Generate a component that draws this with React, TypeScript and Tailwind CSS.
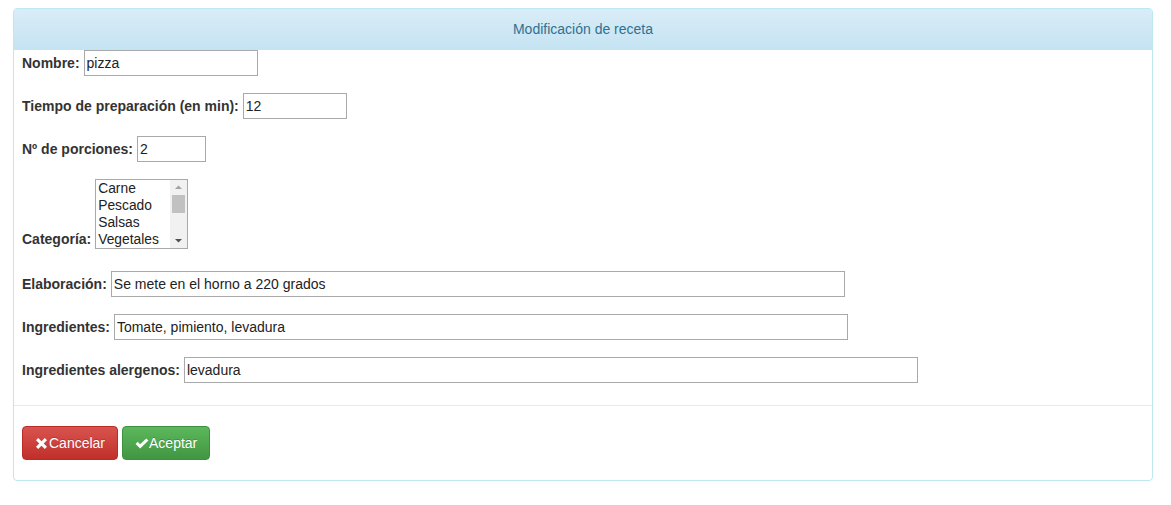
import React from 'react';

const font = { fontFamily: '"Liberation Sans", Arial, sans-serif' };

const inputCls =
  'h-[26px] border border-[#a9a9a9] bg-white px-[2px] text-[14px] text-[#222] outline-none';

interface FieldRowProps {
  label: string;
  value: string;
  width: string;
  className?: string;
}

const FieldRow: React.FC<FieldRowProps> = ({ label, value, width, className = 'mb-[17px]' }) => (
  <div className={`flex items-center gap-1 ${className}`}>
    <label className="text-[14px] font-bold leading-5 text-[#333]">{label}</label>
    <input type="text" readOnly value={value} className={`${inputCls} ${width}`} style={font} />
  </div>
);

const categories = ['Carne', 'Pescado', 'Salsas', 'Vegetales'];

const FakeListbox: React.FC = () => (
  <div className="flex h-[70px] w-[93px] border border-[#a9a9a9] bg-white">
    <ul className="flex-1 overflow-hidden pl-[2px] text-[13.8px] leading-[17px] text-[#222]">
      {categories.map((c) => (
        <li key={c}>{c}</li>
      ))}
    </ul>
    <div className="flex w-[17px] flex-col items-center bg-[#f1f1f1]">
      <svg width="17" height="15" viewBox="0 0 17 15">
        <path d="M5 9 L8.5 5.5 L12 9 Z" fill="#a3a3a3" />
      </svg>
      <div className="h-[18px] w-[13px] bg-[#c1c1c1]" />
      <div className="flex-1" />
      <svg width="17" height="15" viewBox="0 0 17 15">
        <path d="M5 6 L8.5 9.5 L12 6 Z" fill="#505050" />
      </svg>
    </div>
  </div>
);

export default function App() {
  return (
    <div className="bg-white pl-[13px] pt-[8px] pb-[24px]" style={font}>
      <div className="w-[1140px] rounded border border-[#bce8f1] bg-white">
        <div className="flex h-[41px] items-center justify-center rounded-t-[3px] bg-gradient-to-b from-[#d9edf7] to-[#c4e3f3] text-[14px] text-[#31708f]">
          Modificación de receta
        </div>

        <div className="px-[8px] pb-[22px]">
          <FieldRow label="Nombre:" value="pizza" width="w-[174px]" />
          <FieldRow label="Tiempo de preparación (en min):" value="12" width="w-[104px]" />
          <FieldRow label="Nº de porciones:" value="2" width="w-[69px]" />

          <div className="mb-[22px] flex items-end gap-1">
            <label className="text-[14px] font-bold leading-5 text-[#333]">Categoría:</label>
            <FakeListbox />
          </div>

          <FieldRow label="Elaboración:" value="Se mete en el horno a 220 grados" width="w-[734px]" />
          <FieldRow label="Ingredientes:" value="Tomate, pimiento, levadura" width="w-[734px]" />
          <FieldRow
            label="Ingredientes alergenos:"
            value="levadura"
            width="w-[734px]"
            className=""
          />
        </div>

        <div className="flex gap-[4px] border-t border-[#e9e9e9] px-[8px] pt-[20px] pb-[20px]">
          <button
            type="button"
            className="flex h-[34px] items-center rounded border border-[#b92c28] bg-gradient-to-b from-[#d9534f] to-[#c12e2a] px-[12px] text-[14px] text-white [text-shadow:0_-1px_0_rgba(0,0,0,0.2)]"
          >
            <svg width="13" height="13" viewBox="0 0 13 13" className="mr-[1px]">
              <path
                d="M1 3.2 L3.2 1 L6.5 4.3 L9.8 1 L12 3.2 L8.7 6.5 L12 9.8 L9.8 12 L6.5 8.7 L3.2 12 L1 9.8 L4.3 6.5 Z"
                fill="#fff"
              />
            </svg>
            Cancelar
          </button>
          <button
            type="button"
            className="flex h-[34px] items-center rounded border border-[#3e8f3e] bg-gradient-to-b from-[#5cb85c] to-[#419641] px-[12px] text-[14px] text-white [text-shadow:0_-1px_0_rgba(0,0,0,0.2)]"
          >
            <svg width="14" height="11" viewBox="0 0 15 12" className="mr-0">
              <path d="M0.5 6.5 L2.8 4.2 L5.5 6.9 L12.2 0.5 L14.5 2.8 L5.5 11.5 Z" fill="#fff" />
            </svg>
            Aceptar
          </button>
        </div>
      </div>
    </div>
  );
}
